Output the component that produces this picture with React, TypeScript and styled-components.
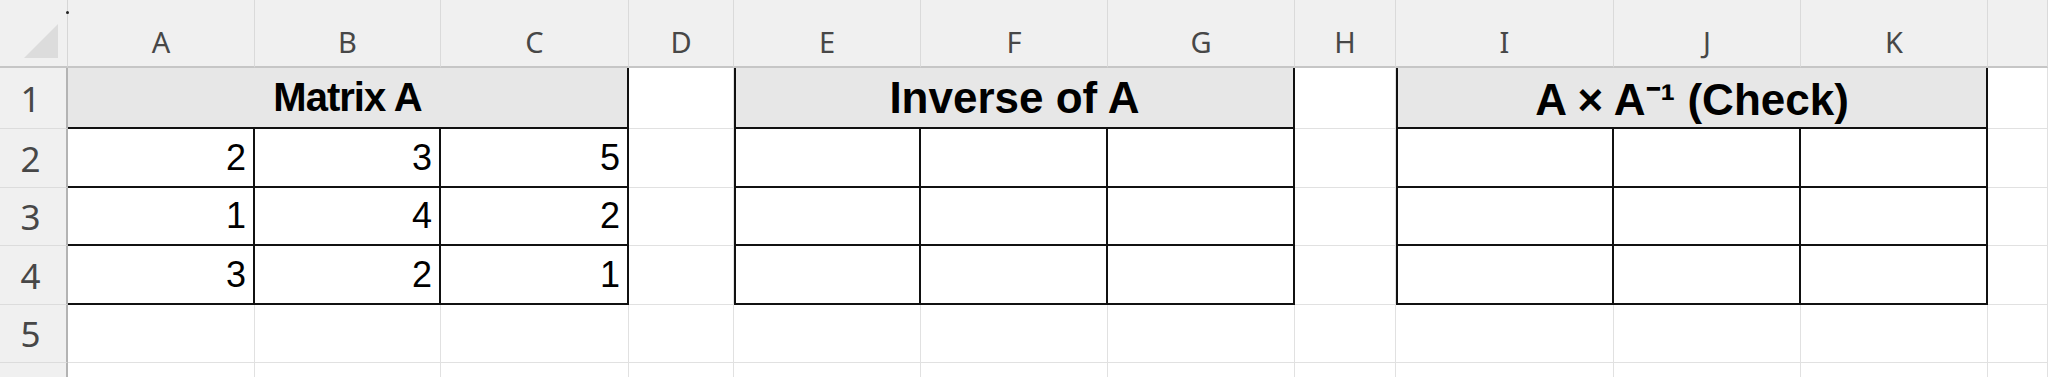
import styled, { createGlobalStyle } from "styled-components";

const GlobalStyle = createGlobalStyle`
  html, body {
    margin: 0;
    padding: 0;
    background: #fff;
    overflow: hidden;
  }
  body {
    font-family: "Liberation Sans", Arial, sans-serif;
  }
`;

// last column runs off the right edge, so its letter isn't visible
const COLUMNS = [
  { id: "A", w: 187 },
  { id: "B", w: 186 },
  { id: "C", w: 188 },
  { id: "D", w: 105 },
  { id: "E", w: 187 },
  { id: "F", w: 187 },
  { id: "G", w: 187 },
  { id: "H", w: 101 },
  { id: "I", w: 218 },
  { id: "J", w: 187 },
  { id: "K", w: 187 },
  { id: "L", w: 0, hidden: true },
];

const ROW_HEIGHTS = [61, 59, 58, 59, 58, 58];

interface Table {
  start: number;
  title: string;
  size: number;
  tracking: number;
  edge: boolean;
  values: number[][];
}

const TABLES: Table[] = [
  {
    start: 0,
    title: "Matrix A",
    size: 40,
    tracking: -1,
    edge: false,
    values: [
      [2, 3, 5],
      [1, 4, 2],
      [3, 2, 1],
    ],
  },
  { start: 4, title: "Inverse of A", size: 44, tracking: 0, edge: true, values: [] },
  { start: 8, title: "A × A⁻¹ (Check)", size: 44, tracking: 0, edge: true, values: [] },
];

const THICK = "2px solid #111";
const GRID = "1px solid #e1e1e1";

const Sheet = styled.div`
  display: grid;
  grid-template-columns: 68px ${COLUMNS.map((c) => (c.w ? `${c.w}px` : "1fr")).join(" ")};
  grid-template-rows: 68px ${ROW_HEIGHTS.map((h) => `${h}px`).join(" ")};
  width: 2048px;
  height: 377px;
  overflow: hidden;
  background: #fff;
`;

const Corner = styled.div`
  position: relative;
  background: #f0f0f0;
  border-right: 1px solid #d6d6d6;
  border-bottom: 2px solid #c6c6c6;

  svg {
    display: block;
  }

  &::after {
    content: "";
    position: absolute;
    left: 66px;
    top: 11px;
    width: 3px;
    height: 3px;
    border-radius: 50%;
    background: #222;
  }
`;

const ColHeader = styled.div`
  display: flex;
  align-items: center;
  justify-content: center;
  padding-top: 16px;
  background: #f0f0f0;
  border-right: 1px solid #dadada;
  border-bottom: 2px solid #c6c6c6;
  font-family: "Noto Sans", "Open Sans", sans-serif;
  font-size: 29px;
  color: #474747;
`;

const RowHeader = styled.div`
  display: flex;
  align-items: center;
  justify-content: center;
  padding-right: 5px;
  background: #f0f0f0;
  border-right: 2px solid #b3b3b3;
  border-bottom: 1px solid #dcdcdc;
  font-family: "Noto Sans", "Open Sans", sans-serif;
  font-size: 35px;
  color: #474747;
`;

const Cell = styled.div`
  border-right: ${GRID};
  border-bottom: ${GRID};
`;

const TitleCell = styled.div<{ $edge: boolean; $size: number; $tracking: number }>`
  grid-column: span 3;
  display: flex;
  align-items: center;
  justify-content: center;
  background: #e7e7e7;
  border-left: ${(p) => (p.$edge ? THICK : "none")};
  border-right: ${THICK};
  border-bottom: ${THICK};
  font-weight: 700;
  font-size: ${(p) => p.$size}px;
  letter-spacing: ${(p) => p.$tracking}px;
  color: #000;
  white-space: nowrap;
`;

const DataCell = styled.div<{ $edge: boolean }>`
  display: flex;
  align-items: center;
  justify-content: flex-end;
  padding-right: 7px;
  border-left: ${(p) => (p.$edge ? THICK : "none")};
  border-right: ${THICK};
  border-bottom: ${THICK};
  font-size: 36px;
  color: #000;
`;

const renderRow = (r: number) => {
  const out = [<RowHeader key={`h${r}`}>{r < ROW_HEIGHTS.length ? r : ""}</RowHeader>];
  COLUMNS.forEach((col, c) => {
    const t = TABLES.find((t) => c >= t.start && c < t.start + 3);
    if (!t || r > 4) {
      out.push(<Cell key={`${col.id}${r}`} />);
      return;
    }
    if (r === 1) {
      if (c === t.start) {
        out.push(
          <TitleCell key={`${col.id}${r}`} $edge={t.edge} $size={t.size} $tracking={t.tracking}>
            {t.title}
          </TitleCell>
        );
      }
      return;
    }
    const v = t.values[r - 2]?.[c - t.start];
    out.push(
      <DataCell key={`${col.id}${r}`} $edge={t.edge && c === t.start}>
        {v ?? ""}
      </DataCell>
    );
  });
  return out;
};

export default function App() {
  return (
    <>
      <GlobalStyle />
      <Sheet>
        <Corner>
          <svg width="66" height="66" viewBox="0 0 66 66">
            <polygon points="58,24 58,58 24,58" fill="#dcdcdc" />
          </svg>
        </Corner>
        {COLUMNS.map((c) => (
          <ColHeader key={c.id}>{c.hidden ? "" : c.id}</ColHeader>
        ))}
        {ROW_HEIGHTS.map((_, i) => renderRow(i + 1))}
      </Sheet>
    </>
  );
}
